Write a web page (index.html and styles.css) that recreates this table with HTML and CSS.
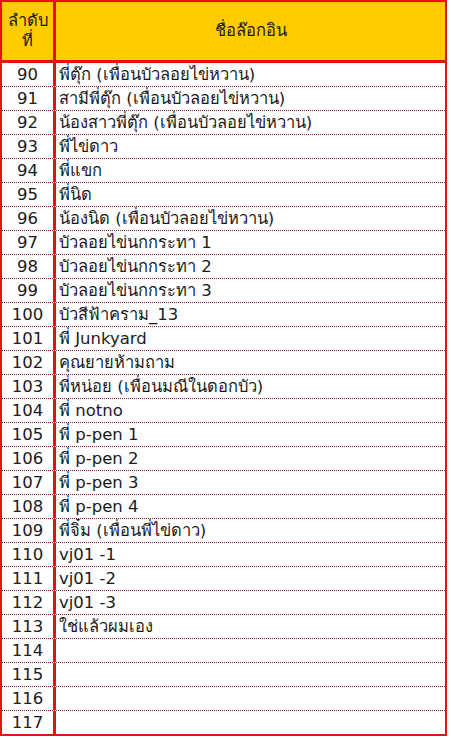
FILE: index.html
```html
<!DOCTYPE html>
<html lang="th">
<head>
<meta charset="utf-8">
<link rel="stylesheet" href="styles.css">
</head>
<body>
<div class="sheet">
  <div class="row head">
    <div class="c1">ลำดับ<br>ที่</div>
    <div class="c2">ชื่อล๊อกอิน</div>
  </div>
  <div class="row"><div class="c1">90</div><div class="c2">พี่ตุ๊ก (เพื่อนบัวลอยไข่หวาน)</div></div>
  <div class="row"><div class="c1">91</div><div class="c2">สามีพี่ตุ๊ก (เพื่อนบัวลอยไข่หวาน)</div></div>
  <div class="row"><div class="c1">92</div><div class="c2">น้องสาวพี่ตุ๊ก (เพื่อนบัวลอยไข่หวาน)</div></div>
  <div class="row"><div class="c1">93</div><div class="c2">พี่ไข่ดาว</div></div>
  <div class="row"><div class="c1">94</div><div class="c2">พี่แขก</div></div>
  <div class="row"><div class="c1">95</div><div class="c2">พี่นิด</div></div>
  <div class="row"><div class="c1">96</div><div class="c2">น้องนิด (เพื่อนบัวลอยไข่หวาน)</div></div>
  <div class="row"><div class="c1">97</div><div class="c2">บัวลอยไข่นกกระทา 1</div></div>
  <div class="row"><div class="c1">98</div><div class="c2">บัวลอยไข่นกกระทา 2</div></div>
  <div class="row"><div class="c1">99</div><div class="c2">บัวลอยไข่นกกระทา 3</div></div>
  <div class="row"><div class="c1">100</div><div class="c2">บัวสีฟ้าคราม_13</div></div>
  <div class="row"><div class="c1">101</div><div class="c2">พี่ Junkyard</div></div>
  <div class="row"><div class="c1">102</div><div class="c2">คุณยายห้ามถาม</div></div>
  <div class="row"><div class="c1">103</div><div class="c2">พี่หน่อย (เพื่อนมณีในดอกบัว)</div></div>
  <div class="row"><div class="c1">104</div><div class="c2">พี่ notno</div></div>
  <div class="row"><div class="c1">105</div><div class="c2">พี่ p-pen 1</div></div>
  <div class="row"><div class="c1">106</div><div class="c2">พี่ p-pen 2</div></div>
  <div class="row"><div class="c1">107</div><div class="c2">พี่ p-pen 3</div></div>
  <div class="row"><div class="c1">108</div><div class="c2">พี่ p-pen 4</div></div>
  <div class="row"><div class="c1">109</div><div class="c2">พี่จิ๋ม (เพื่อนพี่ไข่ดาว)</div></div>
  <div class="row"><div class="c1">110</div><div class="c2">vj01 -1</div></div>
  <div class="row"><div class="c1">111</div><div class="c2">vj01 -2</div></div>
  <div class="row"><div class="c1">112</div><div class="c2">vj01 -3</div></div>
  <div class="row"><div class="c1">113</div><div class="c2">ใช่แล้วผมเอง</div></div>
  <div class="row"><div class="c1">114</div><div class="c2"></div></div>
  <div class="row"><div class="c1">115</div><div class="c2"></div></div>
  <div class="row"><div class="c1">116</div><div class="c2"></div></div>
  <div class="row"><div class="c1">117</div><div class="c2"></div></div>
</div>
</body>
</html>
```

FILE: styles.css
```css
html, body {
  margin: 0;
  padding: 0;
  background: #fff;
}
body {
  font-family: "DejaVu Sans", "Noto Sans", sans-serif;
  font-size: 16.5px;
  color: #1a1a1a;
}
.sheet {
  width: 443px;
  border: 2px solid #e01414;
}
.row {
  display: grid;
  grid-template-columns: 54px 389px;
  background: #fff;
  height: 24px;
  border-bottom: 1px dotted #a0102a;
  box-sizing: border-box;
}
.row:last-child {
  border-bottom: 0;
  height: 23px;
}
.row > div {
  line-height: 23px;
  white-space: nowrap;
  overflow: hidden;
}
.c1 {
  text-align: center;
  border-right: 3px solid #e01414;
}
.row > .c2 {
  padding-left: 3px;
}
.row.head {
  height: 61px;
  border-bottom: 3px solid #e01414;
  background: #ffcc00;
}
.row.head > div {
  display: flex;
  align-items: center;
  justify-content: center;
  text-align: center;
  line-height: 20px;
  padding: 0;
}
```
